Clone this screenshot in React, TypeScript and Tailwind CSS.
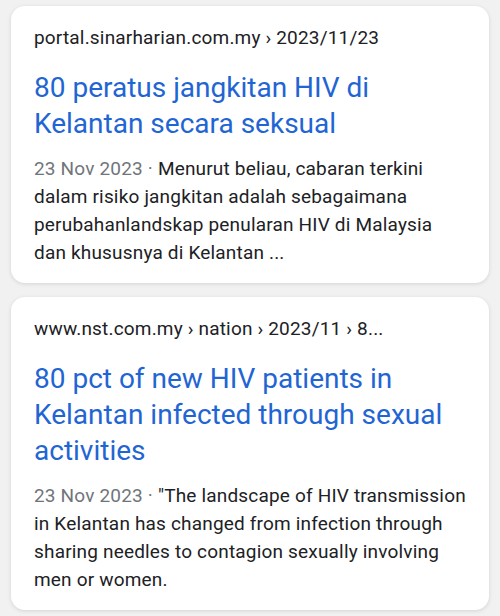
import React from 'react';

const results = [
  {
    url: 'portal.sinarharian.com.my › 2023/11/23',
    title: ['80 peratus jangkitan HIV di', 'Kelantan secara seksual'],
    date: '23 Nov 2023',
    snippet: [
      'Menurut beliau, cabaran terkini',
      'dalam risiko jangkitan adalah sebagaimana',
      'perubahanlandskap penularan HIV di Malaysia',
      'dan khususnya di Kelantan ...',
    ],
  },
  {
    url: 'www.nst.com.my › nation › 2023/11 › 8...',
    title: ['80 pct of new HIV patients in', 'Kelantan infected through sexual', 'activities'],
    date: '23 Nov 2023',
    snippet: [
      '"The landscape of HIV transmission',
      'in Kelantan has changed from infection through',
      'sharing needles to contagion sexually involving',
      'men or women.',
    ],
  },
];

export default function App() {
  return (
    <div className="min-h-[616px] w-[500px] bg-[#f1f1f1] px-[11px] pt-[6px] pb-2 flex flex-col gap-[14px] font-['Roboto',sans-serif]">
      {results.map((r, i) => (
        <div
          key={i}
          className="bg-white rounded-[14px] shadow-[0_1px_4px_rgba(0,0,0,0.12)] pl-[23px] pr-[8px] pt-[19px] pb-[16px] whitespace-nowrap"
        >
          <div className="text-[19px] leading-[26px] tracking-[0.18px] text-[#202124]">{r.url}</div>
          <h3 className="mt-[19px] text-[28px] leading-[36px] text-[#1f65d3]">
            {r.title.map((t, j) => (
              <div key={j}>{t}</div>
            ))}
          </h3>
          <div className="mt-[13px] text-[19px] leading-[28px] tracking-[0.18px] text-[#202124]">
            {r.snippet.map((s, j) => (
              <div key={j}>
                {j === 0 && <span className="text-[#70757a]">{r.date} · </span>}
                {s}
              </div>
            ))}
          </div>
        </div>
      ))}
    </div>
  );
}
